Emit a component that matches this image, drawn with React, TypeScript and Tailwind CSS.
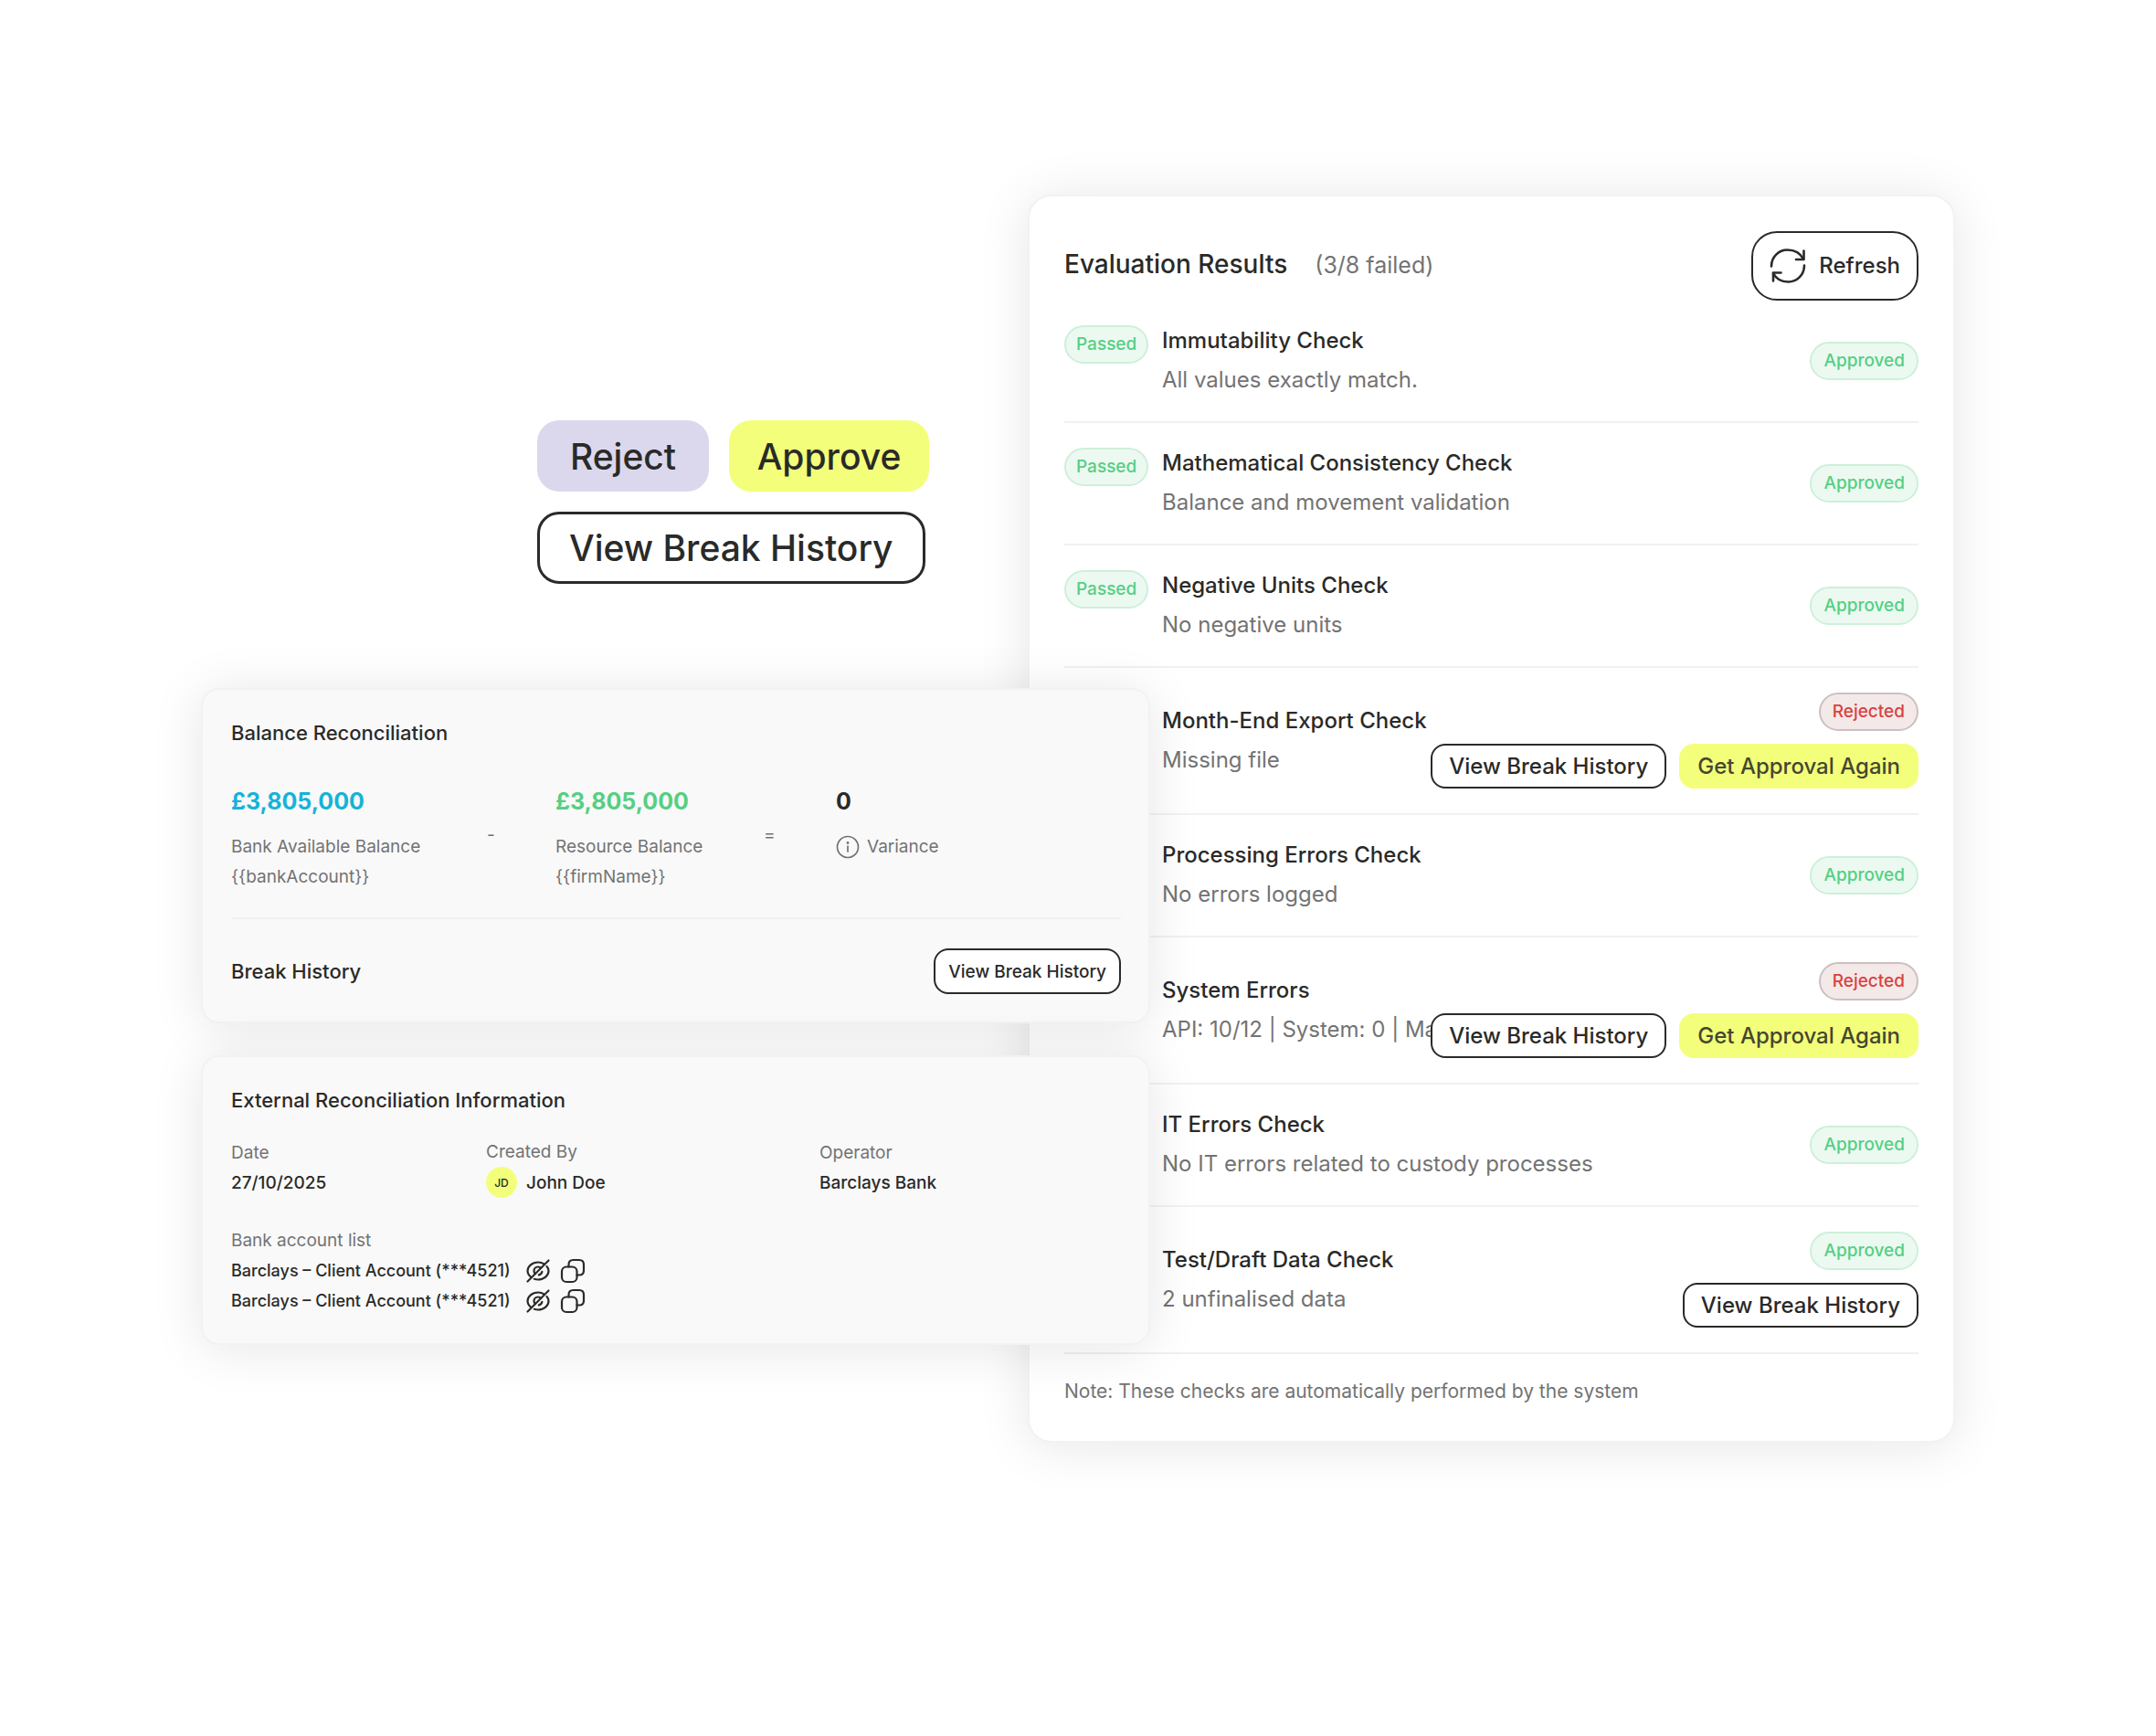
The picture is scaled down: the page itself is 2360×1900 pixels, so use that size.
import React from 'react';

interface EvaluationCheck {
    title: string;
    description: string;
    passed?: boolean;
    outcome: 'Approved' | 'Rejected';
    actions: string[];
}

const checks: EvaluationCheck[] = [
    {
        title: 'Immutability Check',
        description: 'All values exactly match.',
        passed: true,
        outcome: 'Approved',
        actions: [],
    },
    {
        title: 'Mathematical Consistency Check',
        description: 'Balance and movement validation',
        passed: true,
        outcome: 'Approved',
        actions: [],
    },
    {
        title: 'Negative Units Check',
        description: 'No negative units',
        passed: true,
        outcome: 'Approved',
        actions: [],
    },
    {
        title: 'Month-End Export Check',
        description: 'Missing file',
        outcome: 'Rejected',
        actions: ['history', 'approval'],
    },
    {
        title: 'Processing Errors Check',
        description: 'No errors logged',
        outcome: 'Approved',
        actions: [],
    },
    {
        title: 'System Errors',
        description: 'API: 10/12 | System: 0 | Mar',
        outcome: 'Rejected',
        actions: ['history', 'approval'],
    },
    {
        title: 'IT Errors Check',
        description: 'No IT errors related to custody processes',
        outcome: 'Approved',
        actions: [],
    },
    {
        title: 'Test/Draft Data Check',
        description: '2 unfinalised data',
        outcome: 'Approved',
        actions: ['history'],
    },
];

const accounts = [
    { id: 1, label: 'Barclays – Client Account (***4521)' },
    { id: 2, label: 'Barclays – Client Account (***4521)' },
];

const badgeStyles = {
    Passed: 'px-[11px] border-[#cdf0da] bg-[#ecf9f1] text-[#55cf82]',
    Approved: 'px-[13px] border-[#cdf0da] bg-[#ecf9f1] text-[#55cf82]',
    Rejected: 'px-[13px] border-[#cdbfc1] bg-[#f4e9e9] text-[#d9423f]',
};

const Badge: React.FC<{ label: 'Passed' | 'Approved' | 'Rejected' }> = ({ label }) => (
    <span
        className={`inline-flex h-[42px] items-center rounded-full border-2 text-[19px] font-medium ${badgeStyles[label]}`}
    >
        {label}
    </span>
);

const RefreshIcon: React.FC = () => (
    <svg
        width="40"
        height="40"
        viewBox="0 0 40 40"
        fill="none"
        stroke="currentColor"
        strokeWidth="2.6"
        strokeLinecap="round"
        strokeLinejoin="round"
        aria-hidden="true"
    >
        <path d="M2 20.5C2 10 10 2.500 19.500 2.500C27 2.500 33.500 6 37 12.500" />
        <path d="M37.500 3.500V13H29" />
        <path d="M38 19.500C38 30 30 37.500 20.500 37.500C13 37.500 7 34 4 28" />
        <path d="M4 36.500V27.500H12.500" />
    </svg>
);

const EyeOffIcon: React.FC = () => (
    <svg
        width="28"
        height="28"
        viewBox="0 0 28 28"
        fill="none"
        stroke="currentColor"
        strokeWidth="2.2"
        strokeLinecap="round"
        aria-hidden="true"
    >
        <path d="M2.500 25.500L25.500 2.500" />
        <path d="M6.500 21C4 19 2.500 16.500 2.500 14C2.500 9 7.500 4.500 14 4.500C16.500 4.500 18.500 5 20.500 6.300" />
        <path d="M23.500 9C25 10.500 25.500 12.200 25.500 14C25.500 19 20.500 23.500 14 23.500C12.500 23.500 11 23.200 9.800 22.800" />
        <path d="M10.800 17.200C9.800 16.400 9.500 15.200 9.500 14C9.500 11.500 11.500 9.500 14 9.500C15.200 9.500 16.400 10 17.200 10.800" />
        <path d="M18.400 14.800C18 16.700 16.700 18 14.800 18.400" />
    </svg>
);

const CopyIcon: React.FC = () => (
    <svg
        width="28"
        height="28"
        viewBox="0 0 28 28"
        fill="none"
        stroke="currentColor"
        strokeWidth="2.2"
        strokeLinecap="round"
        strokeLinejoin="round"
        aria-hidden="true"
    >
        <rect x="2" y="9.500" width="16.500" height="16.500" rx="5" />
        <path d="M9.500 9.500V7C9.500 4 11.500 2 14.500 2H21C24 2 26 4 26 7V13.500C26 16.500 24 18.500 21 18.500H18.500" />
    </svg>
);

const InfoIcon: React.FC = () => (
    <svg
        width="26"
        height="26"
        viewBox="0 0 26 26"
        fill="none"
        stroke="currentColor"
        strokeWidth="1.7"
        strokeLinecap="round"
        aria-hidden="true"
    >
        <circle cx="13" cy="13" r="11.500" />
        <path d="M13 12V18" />
        <circle cx="13" cy="8.500" r="0.600" fill="currentColor" />
    </svg>
);

const CheckRow: React.FC<{ check: EvaluationCheck }> = ({ check }) => (
    <li className="flex items-center border-b-2 border-[#f1f1f1] py-[27px]">
        <div className="flex h-[78px] min-w-0 flex-1">
            <div className="w-[107px] shrink-0">{check.passed && <Badge label="Passed" />}</div>
            <div className="min-w-0 overflow-hidden leading-[33px] whitespace-nowrap">
                <h3 className="mb-[10px] text-[24px] font-medium">{check.title}</h3>
                <p className="text-[24px] text-[#737373]">{check.description}</p>
            </div>
        </div>
        <div className="flex shrink-0 flex-col items-end gap-[14px]">
            <Badge label={check.outcome} />
            {check.actions.length > 0 && (
                <div className="flex gap-[14px]">
                    {check.actions.includes('history') && (
                        <button
                            type="button"
                            className="h-[49px] rounded-2xl border-2 border-[#2a2a28] bg-white px-[18px] text-[24px] leading-none font-medium"
                        >
                            View Break History
                        </button>
                    )}
                    {check.actions.includes('approval') && (
                        <button
                            type="button"
                            className="h-[49px] rounded-2xl bg-[#f3ff7a] px-5 text-[24px] leading-none font-medium text-[#45472f]"
                        >
                            Get Approval Again
                        </button>
                    )}
                </div>
            )}
        </div>
    </li>
);

const ActionButtons: React.FC = () => (
    <div className="flex flex-col items-start gap-[22px] text-[39px] leading-none font-medium">
        <div className="flex gap-[22px]">
            <button type="button" className="h-[78px] w-[188px] rounded-3xl bg-[#dbd8ee]">
                Reject
            </button>
            <button type="button" className="h-[78px] w-[219px] rounded-3xl bg-[#f3ff7a]">
                Approve
            </button>
        </div>
        <button type="button" className="h-[79px] rounded-3xl border-[3px] border-[#2a2a28] bg-white px-8">
            View Break History
        </button>
    </div>
);

const BalanceCard: React.FC = () => (
    <section className="rounded-[20px] border-2 border-[#f2f2f2] bg-[#f9f9f9] pr-[30px] pb-[30px] pl-[31px] shadow-[0_4px_56px_rgba(20,20,30,0.1)]">
        <h2 className="pt-[31px] text-[22px] leading-8 font-medium">Balance Reconciliation</h2>
        <div className="flex items-center pt-[43px] pb-7 text-[19px] leading-[33px] text-[#737373]">
            <div className="w-[280px]">
                <p className="mb-4 text-[25px] font-bold text-[#15b3d8]">£3,805,000</p>
                <p>Bank Available Balance</p>
                <p>{'{{bankAccount}}'}</p>
            </div>
            <span className="w-[75px] pb-[10px]">-</span>
            <div className="w-[228px]">
                <p className="mb-4 text-[25px] font-bold text-[#55cf82]">£3,805,000</p>
                <p>Resource Balance</p>
                <p>{'{{firmName}}'}</p>
            </div>
            <span className="w-[79px] pb-[10px]">=</span>
            <div className="self-start">
                <p className="mb-4 text-[25px] font-bold text-[#2a2a28]">0</p>
                <p className="flex items-center gap-2">
                    <InfoIcon />
                    Variance
                </p>
            </div>
        </div>
        <div className="flex items-center justify-between border-t-2 border-[#f1f1f1] pt-8">
            <h2 className="text-[22px] leading-8 font-medium">Break History</h2>
            <button
                type="button"
                className="h-[50px] rounded-2xl border-2 border-[#2a2a28] bg-white px-[14px] text-[19px] leading-none font-medium"
            >
                View Break History
            </button>
        </div>
    </section>
);

const ExternalCard: React.FC = () => (
    <section className="rounded-[20px] border-2 border-[#f2f2f2] bg-[#f9f9f9] px-[31px] pb-[30px] text-[19px] shadow-[0_4px_56px_rgba(20,20,30,0.1)]">
        <h2 className="pt-[31px] text-[22px] leading-8 font-medium">External Reconciliation Information</h2>
        <dl className="flex items-end pt-6 leading-[33px]">
            <div className="w-[279px]">
                <dt className="text-[#737373]">Date</dt>
                <dd className="font-medium">27/10/2025</dd>
            </div>
            <div className="w-[365px]">
                <dt className="text-[#737373]">Created By</dt>
                <dd className="flex items-center gap-[10px] font-medium">
                    <span className="flex size-[34px] items-center justify-center rounded-full bg-[#f3ff7a] text-[12px]">
                        JD
                    </span>
                    John Doe
                </dd>
            </div>
            <div>
                <dt className="text-[#737373]">Operator</dt>
                <dd className="font-medium">Barclays Bank</dd>
            </div>
        </dl>
        <h3 className="pt-[30px] leading-[33px] text-[#737373]">Bank account list</h3>
        <ul className="text-[18px] leading-[33px] font-medium">
            {accounts.map((account) => (
                <li key={account.id} className="flex items-center gap-[10px]">
                    <span className="min-w-[312px]">{account.label}</span>
                    <button type="button" aria-label="Show account number">
                        <EyeOffIcon />
                    </button>
                    <button type="button" aria-label="Copy account number">
                        <CopyIcon />
                    </button>
                </li>
            ))}
        </ul>
    </section>
);

const EvaluationResults: React.FC = () => (
    <section className="col-start-2 col-end-4 row-start-1 rounded-[26px] border-2 border-[#f2f2f2] bg-white px-[38px] pt-[38px] pb-[38px] shadow-[0_4px_56px_rgba(20,20,30,0.1)]">
        <header className="flex items-center justify-between">
            <div className="flex items-baseline gap-[30px] pb-1">
                <h2 className="text-[28px] font-medium">Evaluation Results</h2>
                <span className="text-[25px] text-[#737373]">(3/8 failed)</span>
            </div>
            <button
                type="button"
                className="flex h-[76px] items-center gap-[14px] rounded-[28px] border-2 border-[#2a2a28] bg-white px-[18px] text-[24px] font-medium"
            >
                <RefreshIcon />
                Refresh
            </button>
        </header>
        <ul>
            {checks.map((check) => (
                <CheckRow key={check.title} check={check} />
            ))}
        </ul>
        <p className="pt-[25px] text-[21px] leading-8 text-[#737373]">
            Note: These checks are automatically performed by the system
        </p>
    </section>
);

const App: React.FC = () => {
    return (
        <main
            className="min-h-screen bg-white px-5 pt-[213px] pb-20 text-[#2a2a28]"
            style={{ fontFamily: 'Inter, "Liberation Sans", sans-serif' }}
        >
            <div className="mx-auto grid max-w-[1920px] grid-cols-[905fr_134fr_881fr] items-start">
                <EvaluationResults />
                <div className="z-10 col-start-1 col-end-3 row-start-1 pt-[247px]">
                    <div className="pl-[368px]">
                        <ActionButtons />
                    </div>
                    <div className="mt-[114px] flex flex-col gap-[35px]">
                        <BalanceCard />
                        <ExternalCard />
                    </div>
                </div>
            </div>
        </main>
    );
};

export default App;
